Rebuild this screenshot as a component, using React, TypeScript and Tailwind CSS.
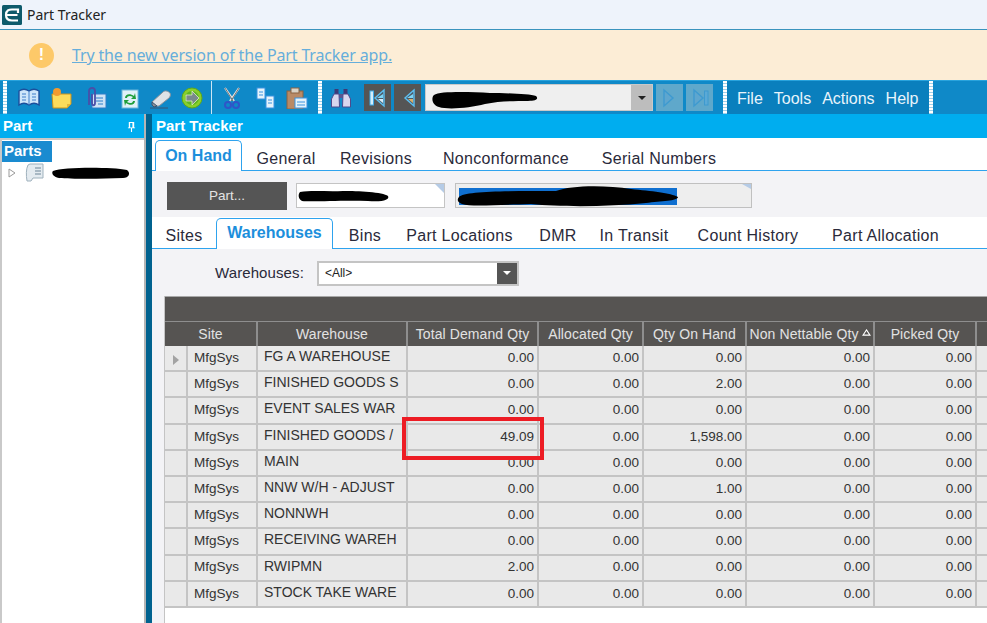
const rows = [
  ["FG A WAREHOUSE", "0.00", "0.00", "0.00"],
  ["FINISHED GOODS S", "0.00", "0.00", "2.00"],
  ["EVENT SALES WAR", "0.00", "0.00", "0.00"],
  ["FINISHED GOODS /", "49.09", "0.00", "1,598.00"],
  ["MAIN", "0.00", "0.00", "0.00"],
  ["NNW W/H - ADJUST", "0.00", "0.00", "1.00"],
  ["NONNWH", "0.00", "0.00", "0.00"],
  ["RECEIVING WAREH", "0.00", "0.00", "0.00"],
  ["RWIPMN", "2.00", "0.00", "0.00"],
  ["STOCK TAKE WARE", "0.00", "0.00", "0.00"],
];

const cols = "grid grid-cols-[23px_70px_150px_131px_105px_103px_128px_102px_60px]";

function Grip() {
  return (
    <div className="w-[4px] h-full shrink-0 bg-[repeating-linear-gradient(to_bottom,#ffffff_0,#ffffff_2px,#9fd0ea_2px,#9fd0ea_3px)]" />
  );
}

function Icon({ ml, w = 22, children }: { ml: number; w?: number; children: React.ReactNode }) {
  return (
    <svg viewBox="0 0 22 22" width={w} height={22} className="shrink-0" style={{ marginLeft: ml }}>
      {children}
    </svg>
  );
}

function NavButton({ faded, flip, last }: { faded?: boolean; flip?: boolean; last?: boolean }) {
  return (
    <div className={`w-[27px] h-[27px] shrink-0 flex items-center justify-center ${faded ? "bg-[#5fa8cb]" : "bg-[#555555]"}`}>
      <svg viewBox="0 0 20 20" width="20" height="20" style={{ transform: flip ? "scaleX(-1)" : undefined }}>
        {last && <rect x="2" y="3" width="3.5" height="14" fill={faded ? "#5aa9d6" : "#d5eefb"} stroke={faded ? "#3d9ad0" : "#3fa9e8"} />}
        <path d="M16 2 L7 10 L16 18 Z" fill={faded ? "#5ea6cf" : "#4d5a66"} stroke={faded ? "#3d9ad0" : "#5cc0f2"} strokeWidth="1.4" />
        {!faded && <path d="M15 6 L9 10 L15 10 Z" fill="#7fd6f5" />}
        {!faded && !last && <path d="M15 11 L10 11 L15 15 Z" fill="#d9b06a" />}
        {!faded && last && <path d="M15 11 L10 11 L15 15 Z" fill="#d8eefa" />}
      </svg>
    </div>
  );
}

function Tabs({
  items,
  active,
  className,
  activeClass,
  idleClass,
}: {
  items: [string, number][];
  active: string;
  className: string;
  activeClass: string;
  idleClass: string;
}) {
  return (
    <div className={`relative flex bg-white border-b border-[#2ea3ee] ${className}`}>
      {items.map(([label, width]) =>
        label === active ? (
          <div
            key={label}
            className={`shrink-0 -mb-px border border-b-0 border-[#2ea3ee] rounded-t-[5px] bg-white text-[#1c8fdc] font-semibold flex items-center justify-center text-[16px] ${activeClass}`}
            style={{ width }}
          >
            {label}
          </div>
        ) : (
          <div
            key={label}
            className={`shrink-0 flex items-center justify-center text-[#2a2a3a] text-[16px] tracking-[0.3px] whitespace-nowrap ${idleClass}`}
            style={{ width }}
          >
            {label}
          </div>
        )
      )}
    </div>
  );
}

export default function App() {
  return (
    <div className="w-[987px] h-[623px] overflow-hidden flex flex-col bg-white font-['Liberation_Sans',Arial,sans-serif]">
      {/* window title */}
      <div className="h-[30px] shrink-0 bg-[#eef3fb] border-b border-[#3a93bd] flex items-center pl-[2px]">
        <svg viewBox="0 0 20 20" width="20" height="20">
          <rect width="20" height="20" rx="1.5" fill="#0d5a6b" />
          <path d="M4 10 C4 5 7 4.5 10 4.5 L16 4.5 L16 8 M4.5 10 L15.5 10 M4 10 C4 15 7 15.5 10 15.5 L16 15.5" fill="none" stroke="#fff" strokeWidth="2.2" />
        </svg>
        <span className="ml-[5px] text-[14px] text-[#222] font-['Noto_Sans',sans-serif]">Part Tracker</span>
      </div>

      {/* upgrade banner */}
      <div className="h-[50px] shrink-0 bg-[#fcedd6] flex items-center pl-[29px]">
        <div className="w-[25px] h-[25px] rounded-full bg-[#fdc969] text-white flex items-center justify-center text-[16px] font-bold">!</div>
        <a className="ml-[18px] text-[#66aedb] underline text-[16px] font-['Noto_Sans',sans-serif] tracking-[-0.14px]">Try the new version of the Part Tracker app.</a>
      </div>

      {/* toolbar */}
      <div className="h-[34px] shrink-0 bg-[#0f89c8] border-t border-[#29a3dd] flex items-center">
        <div className="ml-[3px] h-full"><Grip /></div>
        <Icon ml={11}>
          <path d="M1 4 C4 2 8 2 11 4 C14 2 18 2 21 4 L21 18 C18 16 14 16 11 18 C8 16 4 16 1 18 Z" fill="#cfe6fa" stroke="#1c4f9c" strokeWidth="1.4" />
          <path d="M11 4 L11 18 M4 7 L8 7 M4 10 L8 10 M4 13 L8 13 M14 7 L18 7 M14 10 L18 10 M14 13 L18 13" stroke="#3f7fc9" strokeWidth="1" />
        </Icon>
        <Icon ml={11}>
          <path d="M1 7 L20 7 L20 17 L16 21 L2 21 Z" fill="#fbdc5c" stroke="#c9931d" />
          <path d="M20 17 L16 17 L16 21 Z" fill="#e0b63a" />
          <circle cx="6" cy="5" r="4" fill="#f29a2e" />
        </Icon>
        <Icon ml={12}>
          <rect x="7" y="7" width="14" height="14" fill="#cfe3f5" stroke="#2d7fc9" />
          <path d="M11 11 L18 11 M11 14 L18 14 M13 17 L18 17" stroke="#2d7fc9" />
          <path d="M4 18 L4 4 C4 0 10 0 10 4 L10 16 C10 19 7 19 7 16 L7 7" fill="none" stroke="#4a4fa8" strokeWidth="1.8" />
        </Icon>
        <Icon ml={12}>
          <rect x="3" y="3" width="16" height="18" fill="#dff1f7" stroke="#6fb7d9" />
          <path d="M6 11 C6 7 11 6 15 9 L16 6 L17 12 L12 12 L14 10 C11 8 8 9 8 11 Z M16 14 C16 18 11 19 7 16 L6 19 L5 13 L10 13 L8 15 C11 17 14 16 14 14 Z" fill="#1f9e3a" />
        </Icon>
        <Icon ml={9}>
          <path d="M2 15 L13 5 C15 3 18 4 20 6 C21 8 20 10 19 11 L9 19 L4 19 Z" fill="#dfe3e6" stroke="#8a9199" />
          <path d="M2 15 L7 19 L4 20 L2 18 Z M0 21 L18 21" stroke="#3c5570" fill="#8a9199" />
        </Icon>
        <Icon ml={9}>
          <circle cx="11" cy="11" r="10" fill="#8ad02c" stroke="#5ea81a" />
          <circle cx="11" cy="11" r="7" fill="#5fb526" />
          <path d="M5 8 L11 8 L11 4 L18 11 L11 18 L11 14 L5 14 Z" fill="#7a8a8c" stroke="#dff0c0" strokeWidth="0.8" />
        </Icon>
        <div className="w-[1px] h-full ml-[8px] bg-[#cde6f4] shrink-0" />
        <Icon ml={9}>
          <path d="M4 1 L13 14 M18 1 L9 14" stroke="#e8e8e8" strokeWidth="2" />
          <path d="M4 1 L12 14 M18 1 L10 14" stroke="#555" strokeWidth="0.8" />
          <circle cx="7" cy="18" r="3" fill="none" stroke="#2f55c8" strokeWidth="2" />
          <circle cx="15" cy="18" r="3" fill="none" stroke="#2f55c8" strokeWidth="2" />
        </Icon>
        <Icon ml={11}>
          <rect x="3" y="1" width="8" height="11" fill="#e6f3fb" stroke="#3b93e0" />
          <rect x="12" y="9" width="8" height="12" fill="#e6f3fb" stroke="#3b93e0" />
          <path d="M5 5 L9 5 M5 8 L9 8 M14 13 L18 13 M14 16 L18 16" stroke="#3b93e0" />
        </Icon>
        <Icon ml={10}>
          <rect x="1" y="4" width="16" height="18" fill="#b98a66" stroke="#8a6242" />
          <rect x="5" y="1" width="8" height="5" fill="#d9d2c6" stroke="#8a6242" />
          <rect x="9" y="11" width="12" height="10" fill="#e6f3fb" stroke="#3b93e0" />
          <path d="M11 15 L19 15 M11 18 L19 18" stroke="#3b93e0" />
        </Icon>
        <div className="ml-[10px] h-full"><Grip /></div>
        <Icon ml={8}>
          <rect x="4.5" y="2" width="4" height="5" fill="#3d3a78" />
          <rect x="13.5" y="2" width="4" height="5" fill="#3d3a78" />
          <rect x="9" y="7" width="4" height="4" fill="#5a5690" />
          <path d="M4 7 L9 7 L9.5 20 L1.5 20 L1.5 12 Z M18 7 L13 7 L12.5 20 L20.5 20 L20.5 12 Z" fill="#d8d6ee" stroke="#4f4a8c" strokeWidth="1" />
        </Icon>
        <div className="ml-[12px] flex items-center gap-[3px]">
          <NavButton last />
          <NavButton />
        </div>
        <div className="ml-[4px] w-[228px] h-[27px] shrink-0 bg-[#efefef] border border-[#c9c9c9] flex items-center relative">
          <svg viewBox="0 0 110 25" width="110" height="25" className="shrink-0 ml-[4px]">
            <path d="M4 10 C10 6 40 7 60 8 C75 8 100 9 106 11 C109 14 106 16 98 16 C85 16 70 16 55 19 C40 23 18 25 9 22 C2 20 1 13 4 10 Z" fill="#000" />
          </svg>
          <div className="ml-auto w-[21px] h-full bg-[#bdbdbd] flex items-center justify-center">
            <div className="border-x-[4px] border-x-transparent border-t-[4px] border-t-[#222]" />
          </div>
        </div>
        <div className="ml-[3px] flex items-center gap-[3px]">
          <NavButton faded flip />
          <NavButton faded flip last />
        </div>
        <div className="ml-[10px] h-full"><Grip /></div>
        <div className="flex items-center h-full bg-[#0a7fbd] text-[#e8f4fb] text-[16px] pl-[10px] pt-[2px] gap-[11px] w-[202px] whitespace-nowrap">
          <span>File</span>
          <span>Tools</span>
          <span>Actions</span>
          <span>Help</span>
        </div>
        <div className="h-full"><Grip /></div>
      </div>

      <div className="flex-1 flex min-h-0">
        {/* part tree */}
        <div className="w-[146px] shrink-0 flex flex-col border-r-2 border-[#b5b5b5]">
          <div className="h-[24px] shrink-0 bg-[#00adef] flex items-center justify-between pl-[3px] pr-[8px] text-white font-bold text-[15px]">
            <span>Part</span>
            <svg viewBox="0 0 10 12" width="9" height="11">
              <path d="M2 1 L8 1 L8 7 L9 7 L9 8 L5.6 8 L5.6 12 L4.4 12 L4.4 8 L1 8 L1 7 L2 7 Z M3.5 2 L3.5 7 L6 7 L6 2 Z" fill="#fff" />
            </svg>
          </div>
          <div className="flex-1 bg-white border-t-2 border-l-2 border-[#c9c9c9] pt-[1px]">
            <div className="w-[50px] h-[21px] bg-[#1a8bd0] text-white font-bold text-[15px] flex items-center pl-[2px]">Parts</div>
            <div className="flex items-center h-[22px] pl-[6px]">
              <svg viewBox="0 0 8 10" width="8" height="10">
                <path d="M1 1 L7 5 L1 9 Z" fill="#fff" stroke="#9a9a9a" />
              </svg>
              <svg viewBox="0 0 20 20" width="20" height="20" className="ml-[9px]">
                <path d="M5 1 L18 1 L18 15 L8 15 L6 18 L2 18 C1 12 1 6 3 2 Z" fill="#e4ebf0" stroke="#9fb1bd" />
                <path d="M10 5 L16 5 M10 8 L16 8 M10 11 L16 11" stroke="#6c8597" />
              </svg>
              <svg viewBox="0 0 80 14" width="80" height="14" className="ml-[6px]">
                <path d="M2 5 C12 1 60 1 76 4 C80 7 78 12 72 12 C50 13 20 13 8 12 C2 11 0 7 2 5 Z" fill="#000" />
              </svg>
            </div>
          </div>
        </div>
        <div className="w-[6px] shrink-0 bg-[#00628f]" />

        {/* tracker */}
        <div className="flex-1 min-w-0 flex flex-col">
          <div className="h-[24px] shrink-0 bg-[#00adef] flex items-center pl-[4px] text-white font-bold text-[15px]">Part Tracker</div>

          <Tabs
            className="h-[33px] shrink-0 pt-[2px] pl-[3px]"
            active="On Hand"
            activeClass=""
            idleClass="pt-[7px]"
            items={[["On Hand", 87], ["General", 88], ["Revisions", 92], ["Nonconformance", 168], ["Serial Numbers", 138]]}
          />

          <div className="h-[46px] shrink-0 bg-[#f3f3f6] flex items-start pt-[11px] pl-[15px]">
            <div className="w-[120px] h-[28px] bg-[#555555] text-[#e4e4e4] text-[13.5px] flex items-center justify-center">Part...</div>
            <div className="relative mt-[1px] ml-[9px] w-[149px] h-[25px] bg-white border border-[#c4c4c4] flex items-center">
              <svg viewBox="0 0 92 12" width="92" height="12" className="shrink-0 ml-[1px] mt-[1px]">
                <path d="M2 2 C15 0 30 2 45 1 C60 1 85 2 90 6 C92 10 85 12 70 11 C45 10 15 12 4 11 C0 9 0 4 2 2 Z" fill="#000" />
              </svg>
              <div className="absolute top-0 right-0 border-l-[9px] border-l-transparent border-t-[9px] border-t-[#b5cbe6]" />
            </div>
            <div className="relative mt-[1px] ml-[10px] w-[297px] h-[25px] bg-[#eeeeee] border border-[#c0c0c0] flex items-center">
              <svg viewBox="0 0 222 22" width="222" height="22" className="shrink-0">
                <rect x="3" y="3" width="218" height="17" fill="#0f6fd0" />
                <path d="M3 12 C8 6 50 6 100 6 C115 0 150 0 175 4 C195 6 215 8 222 12 C222 16 205 16 190 18 C150 22 105 22 75 19 C40 20 15 22 6 19 C1 17 1 14 3 12 Z" fill="#000" />
              </svg>
              <div className="absolute top-0 right-0 border-l-[9px] border-l-transparent border-t-[5px] border-t-[#b5cbe6]" />
            </div>
          </div>

          <Tabs
            className="h-[32px] shrink-0 pt-[1px]"
            active="Warehouses"
            activeClass="pb-[2px]"
            idleClass="pt-[5px]"
            items={[["Sites", 64], ["Warehouses", 117], ["Bins", 64], ["Part Locations", 125], ["DMR", 72], ["In Transit", 80], ["Count History", 148], ["Part Allocation", 127]]}
          />

          <div className="flex-1 min-h-0 bg-[#f3f3f6] pl-[12px] overflow-hidden flex flex-col">
            <div className="flex items-center h-[47px] shrink-0 pl-[51px] pt-[1px]">
              <span className="text-[15px] tracking-[0.1px] text-[#2a2a3a]">Warehouses:</span>
              <div className="ml-[13px] w-[202px] h-[25px] bg-white border-2 border-[#c4c4c4] flex items-center pl-[6px] text-[12px] text-[#222]">
                <span>&lt;All&gt;</span>
                <div className="ml-auto w-[20px] h-full bg-[#555555] flex items-center justify-center">
                  <div className="border-x-[4px] border-x-transparent border-t-[4px] border-t-white" />
                </div>
              </div>
            </div>

            <div className="relative flex-1 bg-white border-l border-[#c4c4c4] w-[835px]">
              <div className="h-[25px] bg-[#565452] border-t border-[#a8a8a8]" />
              <div className={`${cols} h-[25px] bg-[#565452] border-t border-[#8e8e8e] text-[#e2e2e2] text-[14px] tracking-[0.1px]`}>
                <div className="col-span-2 flex items-center justify-center border-r-2 border-[#8e8e8e]">Site</div>
                <div className="flex items-center justify-center border-r-2 border-[#8e8e8e]">Warehouse</div>
                <div className="flex items-center justify-center border-r-2 border-[#8e8e8e] whitespace-nowrap">Total Demand Qty</div>
                <div className="flex items-center justify-center border-r-2 border-[#8e8e8e] whitespace-nowrap">Allocated Qty</div>
                <div className="flex items-center justify-center border-r-2 border-[#8e8e8e] whitespace-nowrap">Qty On Hand</div>
                <div className="flex items-center justify-center border-r-2 border-[#8e8e8e] whitespace-nowrap">
                  Non Nettable Qty
                  <svg viewBox="0 0 10 8" width="9" height="7" className="ml-[3px] mb-[3px]">
                    <path d="M5 1 L9 7 L1 7 Z" fill="none" stroke="#fff" strokeWidth="1.2" />
                  </svg>
                </div>
                <div className="flex items-center justify-center border-r-2 border-[#8e8e8e] whitespace-nowrap">Picked Qty</div>
                <div />
              </div>
              {rows.map((r, i) => (
                <div key={r[0]} className={`${cols} h-[26.2px] bg-[#e9e9e9] border-b-2 border-[#c4c4c4] text-[13.5px] text-[#333]`}>
                  <div className="flex items-center justify-center border-r-2 border-[#c4c4c4]">
                    {i === 0 && <div className="border-y-[5px] border-y-transparent border-l-[6px] border-l-[#a3a3a3] mt-[3px]" />}
                  </div>
                  <div className="flex items-center pl-[6px] border-r-2 border-[#c4c4c4]">MfgSys</div>
                  <div className="flex items-center pl-[6px] pb-[3px] border-r-2 border-[#c4c4c4] whitespace-nowrap overflow-hidden text-[14px]">{r[0]}</div>
                  <div className="flex items-center justify-end pr-[3px] border-r-2 border-[#c4c4c4]">{r[1]}</div>
                  <div className="flex items-center justify-end pr-[3px] border-r-2 border-[#c4c4c4]">{r[2]}</div>
                  <div className="flex items-center justify-end pr-[3px] border-r-2 border-[#c4c4c4]">{r[3]}</div>
                  <div className="flex items-center justify-end pr-[3px] border-r-2 border-[#c4c4c4]">0.00</div>
                  <div className="flex items-center justify-end pr-[3px] border-r-2 border-[#c4c4c4]">0.00</div>
                  <div />
                </div>
              ))}
              {/* highlight drawn on the screenshot */}
              <div className="absolute left-[237px] top-[121px] w-[142px] h-[43px] border-[4px] border-[#ed1c24]" />
            </div>
          </div>
        </div>
      </div>
    </div>
  );
}
